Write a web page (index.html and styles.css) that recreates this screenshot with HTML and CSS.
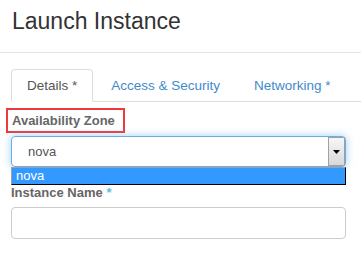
FILE: index.html
```html
<!DOCTYPE html>
<html>
<head>
  <title>Launch Instance</title>
  <link rel="stylesheet" href="styles.css">
</head>
<body>
  <div class="modal-header">
    <h3>Launch Instance</h3>
  </div>
  <div class="modal-body">
    <ul class="nav-tabs">
      <li class="active"><a href="#">Details *</a></li>
      <li><a href="#">Access &amp; Security</a></li>
      <li><a href="#">Networking *</a></li>
    </ul>

    <div class="form-group">
      <label class="field-label highlighted">Availability Zone</label>
      <div class="select-wrap">
        <div class="select-box">
          <span class="select-value">nova</span>
          <span class="select-arrow">
            <svg width="7" height="4" viewBox="0 0 7 4"><path d="M0 0h7L3.5 4z" fill="#000"/></svg>
          </span>
        </div>
        <div class="select-list">
          <div class="option selected">nova</div>
        </div>
      </div>
    </div>

    <div class="form-group">
      <label class="field-label">Instance Name <span class="required">*</span></label>
      <input type="text" class="text-input">
    </div>
  </div>
</body>
</html>
```

FILE: styles.css
```css
body {
  margin: 0;
  font-family: "Liberation Sans", Arial, sans-serif;
  background-color: #fff;
  color: #333;
}

.modal-header {
  padding: 9px 12px 18px;
  border-bottom: 1px solid #e5e5e5;
}

.modal-header h3 {
  margin: 0;
  font-size: 23px;
  font-weight: normal;
  line-height: 25px;
  color: #333;
}

.modal-body {
  padding: 16px 15px 0 11px;
}

.nav-tabs {
  display: flex;
  list-style: none;
  margin: 0 -15px 6px 0;
  padding: 0;
  border-bottom: 1px solid #ddd;
}

.nav-tabs li {
  margin-right: 2px;
  margin-bottom: -1px;
}

.nav-tabs a {
  display: block;
  padding: 7px 15px;
  font-size: 13.5px;
  line-height: 17px;
  color: #428bca;
  text-decoration: none;
  border: 1px solid transparent;
  border-radius: 4px 4px 0 0;
}

.nav-tabs li.active a {
  color: #555;
  background-color: #fff;
  border-color: #ddd;
  border-bottom-color: #fff;
}

.form-group {
  margin-bottom: 15px;
}

.field-label {
  display: block;
  width: fit-content;
  font-size: 13px;
  font-weight: bold;
  line-height: 21px;
  color: #666;
  margin-bottom: 4px;
}

.field-label.highlighted {
  border: 2px solid #ee3a3a;
  padding: 0 8px 0 4px;
  margin-left: -5px;
  margin-bottom: 3px;
}

.required {
  color: #5bc0de;
}

.select-wrap {
  position: relative;
}

.select-box {
  display: flex;
  align-items: stretch;
  height: 31px;
  box-sizing: border-box;
  border: 1px solid #66afe9;
  border-radius: 4px;
  box-shadow: 0 0 8px rgba(102, 175, 233, 0.6);
  padding-left: 16px;
}

.select-value {
  flex: 1;
  font-size: 13px;
  line-height: 29px;
  color: #555;
}

.select-arrow {
  display: flex;
  align-items: center;
  justify-content: center;
  width: 15px;
  border: 1px solid #a0a0a0;
  margin-right: 0;
  background: linear-gradient(#f6f6f6, #d9d9d9);
}

.select-list {
  position: absolute;
  top: 31px;
  left: 0;
  right: 0;
  box-sizing: border-box;
  border-top: 1px solid #a0a0a0;
  border-left: 1px solid #a0a0a0;
  border-right: 1px solid #000;
  border-bottom: 1px solid #000;
}

.option {
  padding-left: 4px;
  font-size: 13px;
  line-height: 16px;
  color: #000;
}

.option.selected {
  background-color: #3399ff;
  color: #fff;
}

.text-input {
  display: block;
  width: 100%;
  height: 32px;
  box-sizing: border-box;
  border: 1px solid #ccc;
  border-radius: 4px;
  padding: 6px 12px;
  font-size: 13px;
}
```
